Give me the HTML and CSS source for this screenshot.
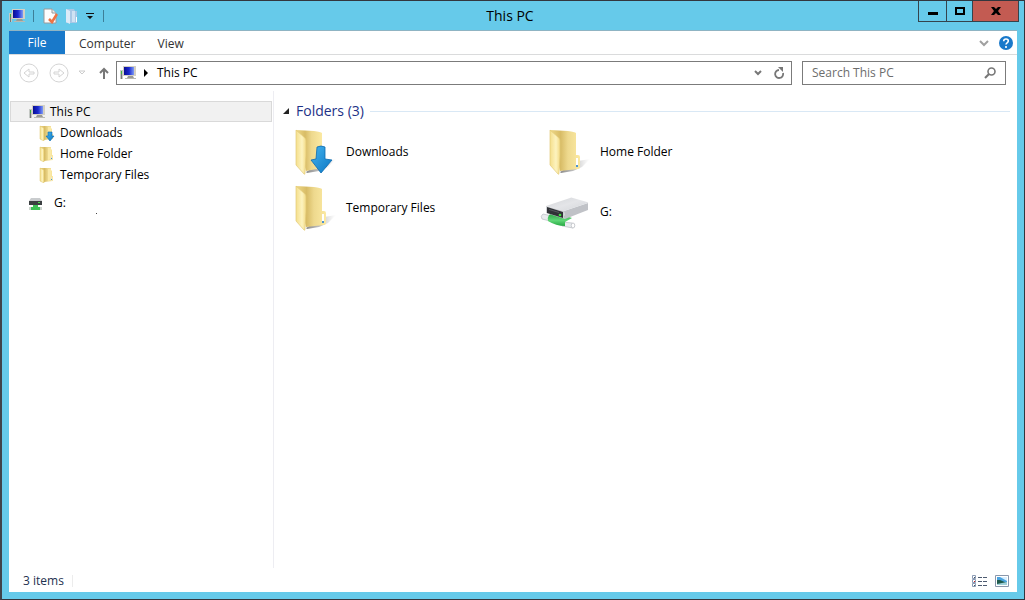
FILE: index.html
```html
<!DOCTYPE html>
<html lang="en">
<head>
<meta charset="utf-8">
<title>This PC</title>
<link rel="stylesheet" href="styles.css">
</head>
<body>
<svg class="sprite" aria-hidden="true">
  <defs>
    <linearGradient id="fold-front" x1="0" y1="0" x2="1" y2="0"><stop offset="0" stop-color="#f5df8c"/><stop offset=".6" stop-color="#fdf3bf"/><stop offset="1" stop-color="#f3db86"/></linearGradient>
    <linearGradient id="fold-back" x1="0" y1="0" x2="1" y2="0"><stop offset="0" stop-color="#f0d988"/><stop offset=".35" stop-color="#d8bc66"/><stop offset=".6" stop-color="#eed98e"/><stop offset="1" stop-color="#fbe9a2"/></linearGradient>
    <linearGradient id="arrow" x1="0" y1="0" x2="1" y2="1"><stop offset="0" stop-color="#45b4ee"/><stop offset="1" stop-color="#0a76c4"/></linearGradient>
    <linearGradient id="shade" x1="0" y1="0" x2="1" y2="0"><stop offset="0" stop-color="#888"/><stop offset=".5" stop-color="#aaa" stop-opacity=".7"/><stop offset="1" stop-color="#ccc" stop-opacity="0"/></linearGradient>
    <linearGradient id="metal" x1="0" y1="0" x2="1" y2="1"><stop offset="0" stop-color="#d2d4d8"/><stop offset=".5" stop-color="#e4e5e8"/><stop offset="1" stop-color="#d4d6da"/></linearGradient>
    <linearGradient id="screen" x1="0" y1="0" x2="1" y2="0"><stop offset="0" stop-color="#0a0f90"/><stop offset=".5" stop-color="#1a28d0"/><stop offset="1" stop-color="#7f9cf5"/></linearGradient>
    <linearGradient id="cable" x1="0" y1="0" x2="0" y2="1"><stop offset="0" stop-color="#1f9c3a"/><stop offset=".6" stop-color="#5fd676"/><stop offset="1" stop-color="#27a843"/></linearGradient>
  </defs>
  <symbol id="pc" viewBox="0 0 16 16">
    <path d="M0 5h3v9H0z" fill="#c4c8c4"/><path d="M1 6h1v3H1z" fill="#3db83d"/><path d="M1 9h1v5H1z" fill="#777"/>
    <path d="M3 1h13v10H3z" fill="#d4d0c4"/><path d="M4 2h10v8H4z" fill="url(#screen)"/>
    <path d="M8 11h5l1 2H7z" fill="#9a9a94"/><path d="M5 13h11v1H5z" fill="#b9b9b2"/>
  </symbol>
  <symbol id="folder" viewBox="0 0 48 48">
    <path d="M16 44l18-11 12-2-8 8-9 4-12 2z" fill="url(#shade)"/>
    <path d="M6 2l18 1q7 1 8 2v22h2q2 0 2 2v10q0 2-2 2L16 43z" fill="url(#fold-back)"/>
    <path d="M6 2l9 8q1 1 1 3v14l-1 18q0 2-1 1L6 37z" fill="url(#fold-front)" stroke="#e3ca7a" stroke-width=".7"/>
    <path d="M32 30h2v8h-2z" fill="#fff"/><path d="M32 37h2v2h-2z" fill="#4d94d2"/>
  </symbol>
  <symbol id="folder-down" viewBox="0 0 48 48">
    <path d="M16 44l18-11 12-2-8 8-9 4-12 2z" fill="url(#shade)"/>
    <path d="M6 2l18 1q7 1 8 2v35l-16 3z" fill="url(#fold-back)"/>
    <path d="M6 2l9 8q1 1 1 3v14l-1 18q0 2-1 1L6 37z" fill="url(#fold-front)" stroke="#e3ca7a" stroke-width=".7"/>
    <path d="M27 19q4-2 8 0v12l7 1-11 13-10-13 5-1z" fill="url(#arrow)" stroke="#0b6aae" stroke-width=".8"/>
  </symbol>
  <symbol id="folder-small" viewBox="0 0 16 16">
    <path d="M1 1h11v2l1 1v5h1v5l-9 1z" fill="url(#fold-back)"/>
    <path d="M1 1l4 2v13l-4-2z" fill="url(#fold-front)" stroke="#dcc067" stroke-width=".5"/><path d="M9 2h3v11l-3 1z" fill="#fae9a6"/>
    <path d="M12 10h1v4h-1z" fill="#e8e4d0"/><path d="M12 12h1v1h-1z" fill="#4d94d2"/>
  </symbol>
  <symbol id="folder-small-down" viewBox="0 0 16 16">
    <use href="#folder-small"/>
    <path d="M9 7h4v4h2l-4 5-4-5h2z" fill="url(#arrow)" stroke="#0b6aae" stroke-width=".6"/>
  </symbol>
  <symbol id="netdrive" viewBox="0 0 52 34">
    <path d="M3 19l9 2-2 5-8-2q-2-3 1-5z" fill="#e9ebee" stroke="#b8bcc2" stroke-width=".7"/>
    <path d="M22 27l10 1q4 2 1 5l-11-2z" fill="#e9ebee" stroke="#b8bcc2" stroke-width=".7"/>
    <path d="M9 20l4-3 19 6-7 4v4q-9 0-17-5-1-3 1-6z" fill="url(#cable)"/>
    <ellipse cx="33" cy="30.500" rx="1.800" ry="2.500" fill="#fff" stroke="#a9adb4" stroke-width=".6"/>
    <path d="M24 16l24-8v7L25 24z" fill="#c0c2c7"/>
    <path d="M6 11L30 3q1-1 3 0l14 4q1 0 1 1L24 16z" fill="url(#metal)"/>
    <path d="M6 11l18 5 1 8-19-6z" fill="#cfd1d5"/><path d="M7 12l16 5v6L7 18z" fill="#303236"/>
    <path d="M9 14l10 3v1L9 15z" fill="#55585e"/>
    <circle cx="20" cy="20" r="1.300" fill="#3fe03f"/>
  </symbol>
  <symbol id="netdrive-small" viewBox="0 0 16 16">
    <path d="M3 3h9l2 3H1z" fill="#c9ccce"/><path d="M1 6h13v4H1z" fill="#3c4042"/><path d="M10 7h2v1h-2z" fill="#4ae04a"/>
    <path d="M5 10h5v2h4v3H2v-3h3z" fill="#3fc257"/><path d="M1 12h2v3H1zM12 12h2v3h-2z" fill="#cdd5cf"/>
  </symbol>
</svg>

<div class="window">
  <header class="titlebar">
    <div class="quick">
      <svg class="i16"><use href="#pc"/></svg>
      <span class="divider"></span>
      <button class="quick-btn" aria-label="Properties"><svg class="i16" viewBox="0 0 16 16"><path d="M2 1h8l4 4v10H2z" fill="#fdfdfd" stroke="#9a9a9a"/><path d="M10 1v4h4" fill="#eee" stroke="#9a9a9a"/><path d="M7 11l3 3 5-8" fill="none" stroke="#ee7444" stroke-width="2.6"/></svg></button>
      <button class="quick-btn" aria-label="New folder"><svg class="i16" viewBox="0 0 16 16"><path d="M2 1h8l1 2h2v12H2z" fill="#a8c8e6"/><path d="M2 1l4 2v13l-4-2z" fill="#dcebf8"/><path d="M8 3h3v11H8z" fill="#cfe2f3"/><path d="M12 9h1v5h-1z" fill="#fff"/></svg></button>
      <button class="quick-btn" aria-label="Customize toolbar"><svg class="i8" viewBox="0 0 8 8"><path d="M0 1h8v1H0zM1 4h6L4 7z" fill="#111"/></svg></button>
      <span class="divider"></span>
    </div>
    <h1 class="title">This PC</h1>
    <div class="controls">
      <button class="ctl" aria-label="Minimize"><svg viewBox="0 0 12 12"><path d="M1 7h10v3H1z"/></svg></button>
      <button class="ctl max" aria-label="Maximize"><svg viewBox="0 0 12 12"><path d="M1 2h10v8H1zM3 4v4h6V4z" fill-rule="evenodd"/></svg></button>
      <button class="ctl close" aria-label="Close"><svg viewBox="0 0 12 12"><path d="M1 2h3l2 2 2-2h3L8 6l3 4H8L6 8l-2 2H1l3-4z"/></svg></button>
    </div>
  </header>

  <div class="client">
    <nav class="tabs">
      <button class="tab file">File</button>
      <button class="tab">Computer</button>
      <button class="tab">View</button>
      <span class="spacer"></span>
      <button class="icon-btn" aria-label="Expand ribbon"><svg class="i10" viewBox="0 0 10 10"><path d="M1 3l4 4 4-4" fill="none" stroke="#a0a0a0" stroke-width="2"/></svg></button>
      <button class="icon-btn help" aria-label="Help"><svg class="i14" viewBox="0 0 14 14"><circle cx="7" cy="7" r="7" fill="#1979ca"/><path d="M4.700 5.200q0-2.200 2.300-2.200t2.300 2q0 1-1.200 1.800Q7 7.600 7 8.600M7 10v2" fill="none" stroke="#fff" stroke-width="1.600"/></svg></button>
    </nav>

    <div class="navbar">
      <button class="icon-btn" aria-label="Back"><svg class="i20" viewBox="0 0 20 20" fill="none" stroke="#d4d4d4"><circle cx="10" cy="10" r="9"/><path d="M15 9v2h-5v3L5 10l5-4v3z"/></svg></button>
      <button class="icon-btn fwd" aria-label="Forward"><svg class="i20" viewBox="0 0 20 20" fill="none" stroke="#d4d4d4"><circle cx="10" cy="10" r="9"/><path d="M5 9v2h5v3l5-4-5-4v3z"/></svg></button>
      <button class="icon-btn recent" aria-label="Recent locations"><svg class="i8" viewBox="0 0 8 8"><path d="M1 2h6L4 5z" fill="none" stroke="#ccc"/></svg></button>
      <button class="icon-btn up" aria-label="Up"><svg class="i12" viewBox="0 0 12 12"><path d="M6 12V2M2 6l4-4 4 4" fill="none" stroke="#777" stroke-width="2"/></svg></button>
      <div class="address">
        <svg class="i16"><use href="#pc"/></svg>
        <svg class="i8 crumb-arrow" viewBox="0 0 8 8"><path d="M2 0l4 4-4 4z"/></svg>
        <a class="crumb" href="#">This PC</a>
        <span class="spacer"></span>
        <button class="icon-btn" aria-label="Previous locations"><svg class="i8" viewBox="0 0 8 8"><path d="M1 2l3 3 3-3" fill="none" stroke="#777" stroke-width="2"/></svg></button>
        <button class="icon-btn reload" aria-label="Refresh"><svg class="i12" viewBox="0 0 12 12"><path d="M6 3A4 4 0 1 0 10 6" fill="none" stroke="#777" stroke-width="1.800"/><path d="M5 0h5v5z" fill="#777"/></svg></button>
      </div>
      <label class="search">
        <input type="search" placeholder="Search This PC" aria-label="Search This PC">
        <svg class="i12" viewBox="0 0 12 12"><circle cx="7.500" cy="4.500" r="3.500" fill="none" stroke="#777" stroke-width="1.600"/><path d="M5 7l-4 4" stroke="#777" stroke-width="2.200"/></svg>
      </label>
    </div>

    <div class="body">
      <aside class="tree">
        <a class="node selected" href="#"><svg class="i16"><use href="#pc"/></svg>This PC</a>
        <a class="node child" href="#"><svg class="i16"><use href="#folder-small-down"/></svg>Downloads</a>
        <a class="node child" href="#"><svg class="i16"><use href="#folder-small"/></svg>Home Folder</a>
        <a class="node child" href="#"><svg class="i16"><use href="#folder-small"/></svg>Temporary Files</a>
        <a class="node drive" href="#"><svg class="i16"><use href="#netdrive-small"/></svg>G:</a>
        <span class="speck"></span>
      </aside>
      <main class="content">
        <h2 class="group"><svg class="i8" viewBox="0 0 8 8"><path d="M7 1v6H1z" fill="#222"/></svg>Folders (3)</h2>
        <div class="items">
          <a class="item" href="#"><svg class="i48"><use href="#folder-down"/></svg>Downloads</a>
          <a class="item" href="#"><svg class="i48"><use href="#folder"/></svg>Home Folder</a>
          <a class="item" href="#"><svg class="i48"><use href="#folder"/></svg>Temporary Files</a>
          <a class="item net" href="#"><svg class="drive-icon"><use href="#netdrive"/></svg>G:</a>
        </div>
      </main>
    </div>

    <footer class="status">
      <span class="count">3 items</span>
      <span class="spacer"></span>
      <button class="icon-btn" aria-label="Details view"><svg class="i16" viewBox="0 0 16 16"><path d="M1.500 2.500h3v3h-3zM1.500 6.500h3v3h-3zM1.500 10.500h3v3h-3z" fill="#fff" stroke="#8b9bb4"/><path d="M7 4h4v1H7zM12 4h4v1h-4zM7 8h4v1H7zM12 8h4v1h-4zM7 12h4v1H7zM12 12h4v1h-4z" fill="#4d5a70"/><path d="M3 4h1v1H3zM3 12h1v1H3z" fill="#456"/><path d="M3 8h1v1H3z" fill="#d22"/></svg></button>
      <button class="icon-btn" aria-label="Large icons view"><svg class="i14" viewBox="0 0 14 14"><path d="M.5 1.500h13v11H.5z" fill="#fff" stroke="#8a97ab"/><path d="M2 3h10v8H2z" fill="#4aa3df"/><path d="M5 3h7v4z" fill="#d8efff"/><path d="M2 6l3 0 7 3v2H2z" fill="#1f5a4b"/><path d="M2 10l5-1 5-1v3H2z" fill="#9fd0d8"/></svg></button>
    </footer>
  </div>
</div>
</body>
</html>
```
FILE: styles.css
```css
* { box-sizing: border-box; }
body {
  margin: 0;
  font: 12px/20px "Open Sans", "Noto Sans", sans-serif;
  color: #000;
}
button { border: 0; padding: 0; background: none; font: inherit; color: inherit; }
a { color: inherit; text-decoration: none; }
svg { display: block; flex: none; }
.sprite { position: absolute; width: 0; height: 0; }
.i8 { width: 8px; height: 8px; }
.i10 { width: 10px; height: 10px; }
.i12 { width: 12px; height: 12px; }
.i14 { width: 14px; height: 14px; }
.i16 { width: 16px; height: 16px; }
.i20 { width: 20px; height: 20px; }
.i48 { width: 48px; height: 48px; }
.spacer { flex: 1; }

.window {
  min-height: 100vh;
  display: flex;
  flex-direction: column;
  background: #66caea;
  border: 1px solid #33363e;
  border-left: 2px solid #40434a;
}
.titlebar {
  display: grid;
  grid-template-columns: 1fr auto 1fr;
  height: 29px;
  padding: 0 5px 0 7px;
}
.quick { display: flex; align-items: center; gap: 8px; }
.quick-btn { display: flex; }
.quick-btn + .quick-btn { margin-left: -2px; }
.quick-btn + .divider { margin-left: 1px; }
.divider { width: 1px; height: 12px; background: #3d7f98; }
.title { margin: 0; padding-right: 8px; font-size: 14px; line-height: 30px; font-weight: 400; }
.controls { display: flex; justify-self: end; height: 21px; border: 1px solid #34434c; border-top: 0; }
.ctl { width: 28px; display: grid; place-items: center; border-right: 1px solid #34434c; }
.ctl svg { width: 12px; height: 12px; }
.max { width: 26px; }
.close { width: 45px; background: #c35b52; border-right: 0; }

.client {
  flex: 1;
  display: flex;
  flex-direction: column;
  margin: 0 7px 7px;
  background: #fff;
  border-top: 1px solid #8fb4c3;
}
.tabs {
  display: flex;
  align-items: center;
  height: 24px;
  padding-right: 4px;
  border-bottom: 1px solid #dadbdc;
}
.tab { height: 23px; padding: 2px 8px 0 14px; color: #333; line-height: 20px; }
.file { width: 56px; padding: 0; background: #1979ca; color: #fff; }
.icon-btn { display: flex; }
.help { margin-left: 10px; }

.navbar { display: flex; align-items: center; height: 36px; padding: 0 11px 0 10px; }
.fwd { margin-left: 10px; }
.recent { margin-left: 9px; }
.up { margin: 0 6px 0 12px; }
.address, .search { display: flex; align-items: center; height: 24px; border: 1px solid #7b7b7b; }
.address { flex: 1; padding: 0 6px 0 3px; }
.crumb-arrow { margin: 0 7px 0 6px; }
.reload { margin-left: 11px; }
.search { flex: none; width: 204px; margin-left: 10px; padding: 0 9px; }
.search input {
  flex: 1;
  min-width: 0;
  padding: 0;
  border: 0;
  outline: 0;
  background: none;
  font: inherit;
}
.search input::placeholder { color: #6d6d6d; opacity: 1; }

.body { flex: 1; display: flex; }
.tree { flex: none; width: 265px; padding: 10px 1px 0; border-right: 1px solid #ededf2; }
.node { display: flex; align-items: center; gap: 5px; height: 21px; padding-left: 19px; }
.selected { padding-left: 18px; background: #f1f1f1; border: 1px solid #d9d9d9; }
.child { padding-left: 29px; }
.drive { gap: 10px; margin-top: 7px; padding-left: 18px; }
.speck { display: block; width: 1px; height: 1px; margin: 0 0 0 86px; background: #444; }

.content { flex: 1; padding: 10px 7px 0 8px; }
.group {
  display: flex;
  align-items: center;
  gap: 6px;
  margin: 0;
  font-size: 14px;
  line-height: 20px;
  font-weight: 400;
  color: #1e3287;
}
.group::after { content: ""; flex: 1; height: 1px; background: #d9e8f5; }
.items { display: grid; grid-template-columns: repeat(auto-fill, 254px); padding: 3px 0 0 8px; max-width: 560px; }
.item { display: flex; align-items: center; gap: 8px; height: 56px; }
.drive-icon { width: 52px; height: 34px; margin-left: -4px; }
.net { padding-top: 8px; }

.status { display: flex; align-items: center; gap: 8px; height: 24px; padding: 1px 8px 0 14px; color: #1e3250; }
.count { padding-right: 8px; border-right: 1px solid #ececec; line-height: 12px; }
```
